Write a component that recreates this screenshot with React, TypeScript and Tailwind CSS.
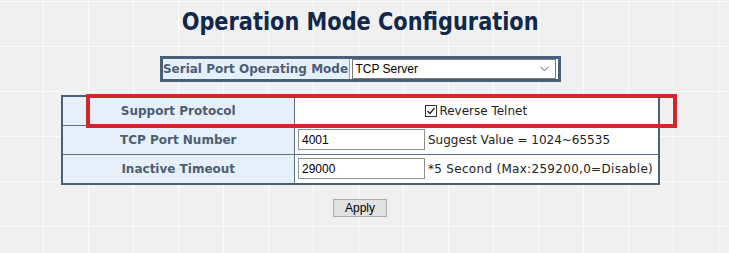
import React from "react";

const label = "font-['DejaVu_Sans',sans-serif] font-bold text-[12px] text-[#4e5d72]";
const val = "font-['DejaVu_Sans',sans-serif] text-[12px] text-[#222]";

function TextInput({ value }: { value: string }) {
  return (
    <div className="w-[127px] h-[21px] border border-[#8f8f8f] bg-white flex items-center pl-[3px] font-['Liberation_Sans',sans-serif] text-[12px] text-black">
      {value}
    </div>
  );
}

export default function App() {
  return (
    <div className="w-[729px] h-[253px] bg-[#f0f0f0] bg-[linear-gradient(to_right,#fbfbfb_1px,transparent_1px),linear-gradient(to_bottom,#fbfbfb_1px,transparent_1px)] bg-[size:45px_45px] bg-[position:43px_1px] overflow-hidden">
      <div className="w-[720px] flex flex-col items-center">
        <h1 className="mt-[7px] h-[30px] leading-[30px] font-['DejaVu_Sans',sans-serif] font-bold text-[24px] text-[#10284a] scale-x-[0.87] whitespace-nowrap">
          Operation Mode Configuration
        </h1>

        <div className="mt-[19px] w-[401px] h-[26px] border-[3px] border-[#4a6079] flex bg-white">
          <div className={`w-[187px] bg-[#e5f0fb] border-r border-[#8aa0b8] flex items-center justify-center ${label}`}>
            Serial Port Operating Mode
          </div>
          <div className="flex-1 flex items-center px-[2px]">
            <div className="w-full h-[20px] border border-[#7a7a7a] bg-white flex items-center justify-between pl-[3px] pr-[6px] font-['Liberation_Sans',sans-serif] text-[12px] text-black">
              <span>TCP Server</span>
              <svg width="9" height="6" viewBox="0 0 9 6">
                <path d="M0.5 0.8 L4.5 4.8 L8.5 0.8" fill="none" stroke="#555" strokeWidth="1" />
              </svg>
            </div>
          </div>
        </div>

        <div className="relative mt-[13px]">
          <table className="w-[599px] border-collapse border-2 border-[#4a6079]">
            <tbody>
              <tr className="h-[29px]">
                <td className={`w-[233px] bg-[#e5f0fb] border border-[#5a7189] text-center ${label}`}>Support Protocol</td>
                <td className="bg-white border border-[#5a7189]">
                  <div className="flex items-center justify-center gap-[2px]">
                    <span className="w-[12px] h-[12px] border border-[#333] bg-white flex items-center justify-center">
                      <svg width="10" height="10" viewBox="0 0 10 10">
                        <path d="M1.5 5 L4 7.5 L8.5 2" fill="none" stroke="#222" strokeWidth="1.3" />
                      </svg>
                    </span>
                    <span className={val}>Reverse Telnet</span>
                  </div>
                </td>
              </tr>
              <tr className="h-[29px]">
                <td className={`bg-[#e5f0fb] border border-[#5a7189] text-center ${label}`}>TCP Port Number</td>
                <td className="bg-white border border-[#5a7189] px-[3px]">
                  <div className="flex items-center gap-[3px]">
                    <TextInput value="4001" />
                    <span className={val}>Suggest Value = 1024~65535</span>
                  </div>
                </td>
              </tr>
              <tr className="h-[30px]">
                <td className={`bg-[#e5f0fb] border border-[#5a7189] text-center ${label}`}>Inactive Timeout</td>
                <td className="bg-white border border-[#5a7189] px-[3px]">
                  <div className="flex items-center gap-[3px]">
                    <TextInput value="29000" />
                    <span className="font-['DejaVu_Sans',sans-serif] text-[12px] text-[#222] tracking-[0.3px] whitespace-nowrap">*5 Second (Max:259200,0=Disable)</span>
                  </div>
                </td>
              </tr>
            </tbody>
          </table>
          <div className="absolute left-[25px] top-[-1px] w-[591px] h-[34px] border-4 border-[#d3252e] pointer-events-none" />
        </div>

        <button className="mt-[14px] w-[54px] h-[18px] bg-[#e1e1e1] border border-[#adadad] font-['Liberation_Sans',sans-serif] text-[12px] text-black leading-none">
          Apply
        </button>
      </div>
    </div>
  );
}
